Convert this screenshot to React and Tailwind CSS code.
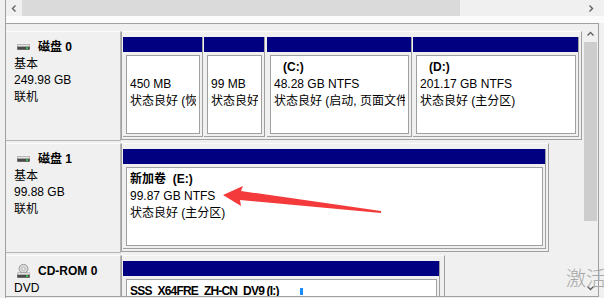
import React from "react";

const DISKS = [
  {
    kind: "disk",
    name: "磁盘 0",
    lines: ["基本", "249.98 GB", "联机"],
    area: "w-[461px]",
    parts: [
      { w: "w-[80px]", size: "450 MB", status: "状态良好 (恢复分区)" },
      { w: "w-[61px] ml-[1px]", size: "99 MB", status: "状态良好 (EFI 系统分区)" },
      { w: "w-[145px] ml-[2px]", drive: "(C:)", size: "48.28 GB NTFS", status: "状态良好 (启动, 页面文件, 故障转储, 主分区)" },
      { w: "w-[166px] ml-[1px]", drive: "(D:)", size: "201.17 GB NTFS", status: "状态良好 (主分区)" },
    ],
  },
  {
    kind: "disk",
    name: "磁盘 1",
    lines: ["基本", "99.88 GB", "联机"],
    area: "w-[428px]",
    parts: [
      { w: "w-[423px]", name: "新加卷", drive: "(E:)", size: "99.87 GB NTFS", status: "状态良好 (主分区)" },
    ],
  },
  {
    kind: "cd",
    name: "CD-ROM 0",
    lines: ["DVD", "5.58 GB", "联机"],
    area: "w-[324px] pr-[4px]",
    parts: [
      { w: "w-[317px]", name: "SSS_X64FRE_ZH-CN_DV9 (I:)", tight: true, size: "5.58 GB UDF", status: "状态良好 (主分区)" },
    ],
  },
];

function DriveIcon() {
  return (
    <svg width="13" height="6" viewBox="0 0 13 6">
      <rect x="0" y="0" width="13" height="6" rx="1" fill="#8c8c8c" />
      <rect x="0.5" y="0.5" width="12" height="2.2" fill="#e4e4e4" />
      <rect x="0.5" y="2.7" width="12" height="2.8" fill="#4a4a4a" />
      <rect x="9" y="3.3" width="2" height="1.6" fill="#35d04a" />
    </svg>
  );
}

function CdIcon() {
  return (
    <svg width="13" height="14" viewBox="0 0 13 14">
      <circle cx="6.5" cy="4.8" r="4.5" fill="#d8d8d8" stroke="#8a8a8a" strokeWidth="0.8" />
      <circle cx="6.5" cy="4.8" r="1.6" fill="#f4f4f4" stroke="#9a9a9a" strokeWidth="0.6" />
      <rect x="0" y="8.5" width="13" height="5.5" rx="1" fill="#8c8c8c" />
      <rect x="0.5" y="9" width="12" height="1.8" fill="#e4e4e4" />
      <rect x="0.5" y="10.8" width="12" height="2.7" fill="#4a4a4a" />
      <rect x="9" y="11.3" width="2" height="1.6" fill="#35d04a" />
    </svg>
  );
}

function Chevron({ dir }) {
  const pts = {
    left: "4.5,0.5 1.5,3.5 4.5,6.5",
    right: "1.5,0.5 4.5,3.5 1.5,6.5",
    up: "0.5,4.5 3.5,1.5 6.5,4.5",
    down: "0.5,1.5 3.5,4.5 6.5,1.5",
  }[dir];
  const vertical = dir === "up" || dir === "down";
  return (
    <svg width={vertical ? 7 : 6} height={vertical ? 6 : 7} viewBox={vertical ? "0 0 7 6" : "0 0 6 7"}>
      <polyline points={pts} fill="none" stroke="#606060" strokeWidth="1.4" />
    </svg>
  );
}

function Partition({ p }) {
  return (
    <div className={`${p.w} shrink-0 flex flex-col border-r border-b border-[#a0a0a0] pb-[2px]`}>
      <div className="h-[15px] bg-[#000080]" />
      <div className="pt-[3px] pl-[3px] pr-[2px]">
        <div className="h-[79px] bg-white border border-[#a0a0a0] pl-[3px] pr-[3px] pt-[3px] overflow-hidden whitespace-nowrap leading-[17px] text-[12px] text-black">
          <div className={`font-bold ${p.tight ? "tracking-[-0.8px]" : ""}`}>
            {p.name && <span>{p.name}</span>}
            {p.name && p.drive && <span>&nbsp;&nbsp;</span>}
            {p.drive && <span className={p.name ? "" : "ml-[9px]"}>{p.drive}</span>}
            {!p.name && !p.drive && <span>&nbsp;</span>}
            {p.tight && <span className="inline-block w-[3px] h-[7px] ml-[21px] bg-[#1a8cff] align-middle" />}
          </div>
          <div>{p.size}</div>
          <div className="overflow-hidden">{p.status}</div>
        </div>
      </div>
    </div>
  );
}

function DiskRow({ d }) {
  return (
    <div className="flex h-[110px] shrink-0">
      <div className="w-[115px] shrink-0 border-t border-t-[#fbfbfb] border-r border-r-[#b4b4b4] border-b border-b-[#b4b4b4] pl-[8px] pt-[7px] leading-[16.5px] text-[12px] text-black">
        <div className="flex items-center">
          <span className="ml-[3px] w-[13px] flex justify-center">
            {d.kind === "cd" ? <CdIcon /> : <DriveIcon />}
          </span>
          <span className="ml-[8px] font-bold">{d.name}</span>
        </div>
        {d.lines.map((l) => (
          <div key={l}>{l}</div>
        ))}
      </div>
      <div className={`${d.area} shrink-0 h-[109px] flex border-l border-l-[#a0a0a0] border-t border-t-[#fbfbfb] border-r border-r-[#a0a0a0] border-b border-b-[#a0a0a0] pl-[1px] pt-[5px] items-start`}>
        {d.parts.map((p, i) => (
          <Partition key={i} p={p} />
        ))}
      </div>
    </div>
  );
}

export default function App() {
  return (
    <div className="relative w-[604px] h-[298px] overflow-hidden bg-[#f0f0f0] flex font-['Liberation_Sans','Noto_Sans_CJK_SC',sans-serif]">
      <div className="w-[5px] shrink-0" />
      <div className="flex-1 flex flex-col border-l border-[#a0a0a0] pb-[1px]">
        {/* horizontal scrollbar */}
        <div className="h-[16px] flex shrink-0">
          <div className="w-[16px] flex items-center justify-center">
            <Chevron dir="left" />
          </div>
          <div className="w-[438px] bg-[#dadada]" />
          <div className="flex-1" />
          <div className="w-[16px] mr-[5px] flex items-center justify-center">
            <Chevron dir="right" />
          </div>
        </div>
        <div className="h-[7px] bg-[#fbfbfb] shrink-0" />
        {/* disk view panel */}
        <div className="flex-1 flex border-t border-b border-r border-[#a0a0a0] mr-[5px] min-h-0">
          <div className="w-[577px] shrink-0 pt-[7px] flex flex-col gap-[2px] overflow-hidden">
            {DISKS.map((d) => (
              <DiskRow key={d.name} d={d} />
            ))}
          </div>
          <div className="w-[15px] shrink-0 mt-[2px] flex flex-col">
            <div className="h-[16px] flex items-center justify-center">
              <Chevron dir="up" />
            </div>
            <div className="h-[179px] mx-[1px] bg-[#cdcdcd]" />
            <div className="flex-1" />
            <div className="h-[16px] flex items-center justify-center">
              <Chevron dir="down" />
            </div>
          </div>
        </div>
      </div>

      {/* red annotation arrow */}
      <svg className="absolute left-0 top-0 pointer-events-none" width="604" height="298" viewBox="0 0 604 298">
        <polygon points="223,195 243,186 241,191 381,211 381,213 240,200 241,206" fill="#f43a3a" />
      </svg>

      {/* activation watermark */}
      <div className="absolute left-[566px] top-[266px] text-[20px] leading-[24px] text-[#a8a8a8] whitespace-nowrap font-['Noto_Sans_CJK_SC',sans-serif] font-light">
        激活 Windows
      </div>
    </div>
  );
}
